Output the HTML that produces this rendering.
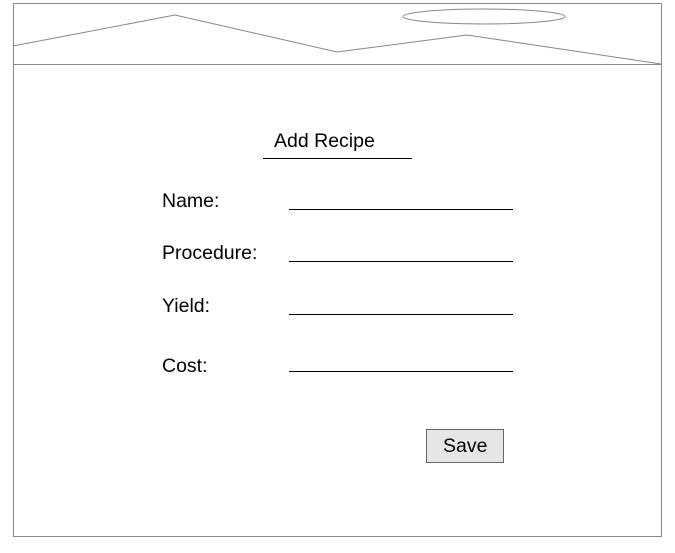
<!DOCTYPE html>
<html><head><style>
body{margin:0;width:675px;height:553px;background:#fff;overflow:hidden;font-family:"Liberation Sans",sans-serif;}
svg{position:absolute;left:0;top:0}
text{font-family:"Liberation Sans",sans-serif;font-size:19.5px;fill:#000}
</style></head><body>
<svg width="675" height="553">
<rect x="13.5" y="3.5" width="648" height="533" fill="#fff" stroke="#888" stroke-width="1"/>
<line x1="13" y1="64.5" x2="661" y2="64.5" stroke="#888"/>
<polyline points="13,46 175,15 337,52 467,35 661,64" fill="none" stroke="#888"/>
<ellipse cx="484" cy="16.5" rx="81" ry="7.5" fill="none" stroke="#888"/>
<text x="274" y="147">Add Recipe</text>
<line x1="263" y1="158.5" x2="412" y2="158.5" stroke="#000"/>
<text x="162" y="207">Name:</text>
<text x="162" y="259">Procedure:</text>
<text x="162" y="312">Yield:</text>
<text x="162" y="372">Cost:</text>
<line x1="289" y1="209.5" x2="513" y2="209.5" stroke="#000"/>
<line x1="289" y1="261.5" x2="513" y2="261.5" stroke="#000"/>
<line x1="289" y1="314.5" x2="513" y2="314.5" stroke="#000"/>
<line x1="289" y1="371.5" x2="513" y2="371.5" stroke="#000"/>
<rect x="426.5" y="429.5" width="77" height="33" fill="#e6e6e6" stroke="#666"/>
<text x="443" y="452">Save</text>
</svg>
</body></html>
